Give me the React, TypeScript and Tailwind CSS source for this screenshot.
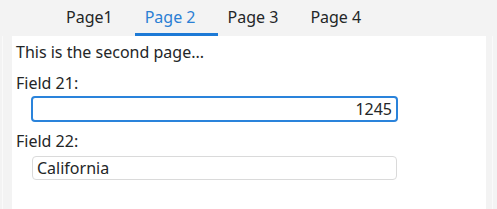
import { useState } from "react";

const tabs = ["Page1", "Page 2", "Page 3", "Page 4"];

export default function App() {
  const [active, setActive] = useState(1);

  return (
    <div
      className="w-[497px] h-[209px] bg-[#f3f3f3] text-[#232627] text-[16px] leading-[22px] flex flex-col overflow-hidden"
      style={{ fontFamily: '"Noto Sans", "DejaVu Sans", sans-serif' }}
    >
      {/* tab bar */}
      <div className="h-[36px] flex pl-[56px] shrink-0">
        {tabs.map((t, i) => (
          <button
            key={t}
            onClick={() => setActive(i)}
            className={
              "h-[36px] pl-[10px] pr-[22px] flex items-start pt-[6px] border-b-[3px] " +
              (i === active
                ? "border-[#1d7ad6] text-[#2a7fd4]"
                : "border-transparent text-[#232627]")
            }
          >
            {t}
          </button>
        ))}
      </div>

      <div className="flex flex-1">
        <div className="w-[12px] flex pl-[2px]">
          <div className="w-px bg-[#fafafa]" />
        </div>
        <div className="w-[474px] bg-white pl-[4px] pt-[5px]">
          <div>This is the second page...</div>
          <div className="mt-[9px]">Field 21:</div>
          <input
            defaultValue="1245"
            className="mt-[2px] ml-[15px] block w-[367px] h-[26px] border-2 border-[#2a83db] rounded-[4px] px-[4px] text-right outline-none"
          />
          <div className="mt-[8px]">Field 22:</div>
          <input
            defaultValue="California"
            className="mt-[4px] ml-[16px] block w-[365px] h-[24px] border border-[#dadada] rounded-[4px] px-[4px] outline-none"
          />
        </div>
        <div className="flex-1 flex justify-end pr-[4px]">
          <div className="w-px bg-[#fafafa]" />
        </div>
      </div>
    </div>
  );
}
